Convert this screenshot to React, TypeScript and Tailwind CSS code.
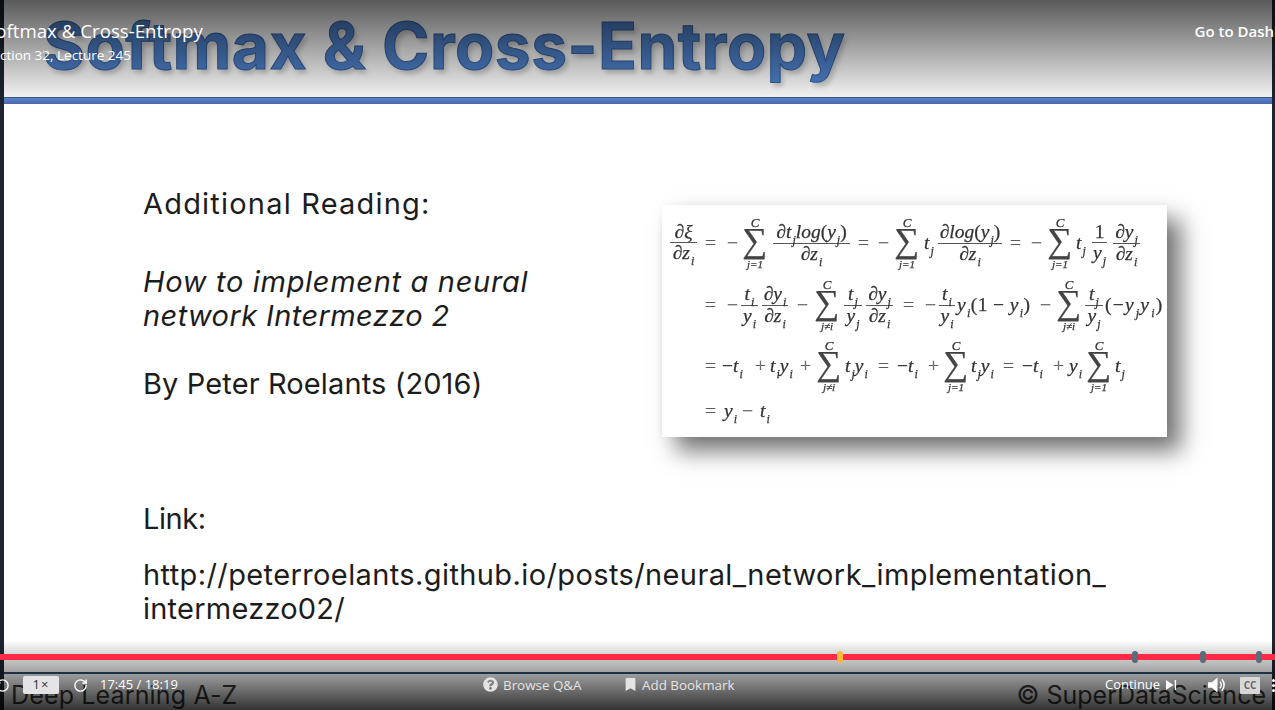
import type { ReactNode } from "react";
import { RotateCcw, RotateCw } from "lucide-react";
import { FaBookmark, FaQuestionCircle } from "react-icons/fa";

function I({ children }: { children: ReactNode }) {
  return <span className="italic">{children}</span>;
}

// variable with a small subscript, e.g. t_j
function V({ n, s }: { n: string; s: string }) {
  return (
    <span className="whitespace-nowrap italic">
      {n}
      <sub className="ml-[1px] text-[12px] leading-none align-[-3px]">{s}</sub>
    </span>
  );
}

function Frac({ top, bottom, className }: { top: ReactNode; bottom: ReactNode; className: string }) {
  return (
    <span className={`inline-flex flex-col items-center leading-[20px] ${className}`}>
      <span className="whitespace-nowrap">{top}</span>
      <span className="h-px w-full shrink-0 bg-[#555]" />
      <span className="whitespace-nowrap">{bottom}</span>
    </span>
  );
}

function Sum({ low, className = "" }: { low: string; className?: string }) {
  return (
    <span className={`inline-flex w-[24px] flex-col items-center ${className}`}>
      <span className="text-[13px] italic leading-[12px]">C</span>
      <span className="mb-[5px] h-[24px] text-[35px] leading-[24px] text-[#444]">∑</span>
      <span className="text-[11px] italic leading-[12px]">{low}</span>
    </span>
  );
}

function Op({ children, className = "" }: { children: ReactNode; className?: string }) {
  return <span className={`w-[11px] text-[#888] ${className}`}>{children}</span>;
}

function Dy({ v, s }: { v: string; s: string }) {
  return (
    <>
      ∂<V n={v} s={s} />
    </>
  );
}

function Formula() {
  return (
    <div className="flex h-[232px] w-[505px] shrink-0 flex-col bg-white pl-[8px] font-['Liberation_Serif',serif] text-[19.5px] text-[#333] shadow-[14px_14px_22px_rgba(0,0,0,0.55),0_0_10px_rgba(0,0,0,0.05)] blur-[0.45px] [-webkit-text-stroke:0.25px_#333]">
      <div className="mt-[12px] flex h-[52px] items-center">
        <Frac className="w-[27px]" top={<>∂<I>ξ</I></>} bottom={<Dy v="z" s="i" />} />
        <Op className="ml-[8px]">=</Op>
        <Op className="ml-[11px]">−</Op>
        <Sum className="ml-[5px]" low="j=1" />
        <Frac className="ml-[6px] w-[77px]" top={<>∂<V n="t" s="j" /><I>log</I>(<V n="y" s="j" />)</>} bottom={<Dy v="z" s="i" />} />
        <Op className="ml-[8px]">=</Op>
        <Op className="ml-[9px]">−</Op>
        <Sum className="ml-[6px]" low="j=1" />
        <span className="ml-[5px] w-[14px]"><V n="t" s="j" /></span>
        <Frac className="w-[64px]" top={<>∂<I>log</I>(<V n="y" s="j" />)</>} bottom={<Dy v="z" s="i" />} />
        <Op className="ml-[8px]">=</Op>
        <Op className="ml-[10px]">−</Op>
        <Sum className="ml-[6px]" low="j=1" />
        <span className="ml-[4px] w-[16px]"><V n="t" s="j" /></span>
        <Frac className="w-[15px]" top="1" bottom={<V n="y" s="j" />} />
        <Frac className="ml-[6px] w-[27px]" top={<Dy v="y" s="j" />} bottom={<Dy v="z" s="i" />} />
      </div>
      <div className="mt-[10px] flex h-[52px] items-center pl-[35px]">
        <Op>=</Op>
        <Op className="ml-[11px]">−</Op>
        <Frac className="ml-[3px] w-[17px]" top={<V n="t" s="i" />} bottom={<V n="y" s="i" />} />
        <Frac className="ml-[4px] w-[26px]" top={<Dy v="y" s="i" />} bottom={<Dy v="z" s="i" />} />
        <Op className="ml-[9px]">−</Op>
        <Sum className="ml-[7px]" low="j≠i" />
        <Frac className="ml-[5px] w-[18px]" top={<V n="t" s="j" />} bottom={<V n="y" s="j" />} />
        <Frac className="ml-[4px] w-[27px]" top={<Dy v="y" s="j" />} bottom={<Dy v="z" s="i" />} />
        <Op className="ml-[10px]">=</Op>
        <Op className="ml-[11px]">−</Op>
        <Frac className="ml-[3px] w-[16px]" top={<V n="t" s="i" />} bottom={<V n="y" s="i" />} />
        <span className="ml-[2px] w-[75px] whitespace-nowrap tracking-[0.4px]"><V n="y" s="i" />(1 − <V n="y" s="i" />)</span>
        <Op className="ml-[8px]">−</Op>
        <Sum className="ml-[6px]" low="j≠i" />
        <Frac className="ml-[4px] w-[18px]" top={<V n="t" s="j" />} bottom={<V n="y" s="j" />} />
        <span className="ml-[2px] whitespace-nowrap tracking-[1.2px]">(−<V n="y" s="j" /><V n="y" s="i" />)</span>
      </div>
      <div className="mt-[9px] flex h-[52px] items-center pl-[35px]">
        <Op>=</Op>
        <span className="ml-[6px] w-[25px] whitespace-nowrap">−<V n="t" s="i" /></span>
        <Op className="ml-[8px]">+</Op>
        <span className="ml-[4px] w-[23px] whitespace-nowrap"><V n="t" s="i" /><V n="y" s="i" /></span>
        <Op className="ml-[7px]">+</Op>
        <Sum className="ml-[6px]" low="j≠i" />
        <span className="ml-[4px] w-[25px] whitespace-nowrap"><V n="t" s="j" /><V n="y" s="i" /></span>
        <Op className="ml-[8px]">=</Op>
        <span className="ml-[8px] w-[23px] whitespace-nowrap">−<V n="t" s="i" /></span>
        <Op className="ml-[8px]">+</Op>
        <Sum className="ml-[5px]" low="j=1" />
        <span className="ml-[3px] w-[25px] whitespace-nowrap"><V n="t" s="j" /><V n="y" s="i" /></span>
        <Op className="ml-[7px]">=</Op>
        <span className="ml-[8px] w-[26px] whitespace-nowrap">−<V n="t" s="i" /></span>
        <Op className="ml-[5px]">+</Op>
        <span className="ml-[5px] w-[11px]"><V n="y" s="i" /></span>
        <Sum className="ml-[7px]" low="j=1" />
        <span className="ml-[4px]"><V n="t" s="j" /></span>
      </div>
      <div className="mt-[8px] flex items-center pl-[35px] leading-[22px]">
        <Op>=</Op>
        <span className="ml-[8px] w-[11px]"><V n="y" s="i" /></span>
        <Op className="ml-[7px]">−</Op>
        <span className="ml-[7px]"><V n="t" s="i" /></span>
      </div>
    </div>
  );
}

function Slide() {
  return (
    <div className="ml-[4px] mr-[3px] flex h-full min-w-0 flex-1 flex-col overflow-hidden bg-white">
      <header className="flex h-[97px] shrink-0 items-start pl-[39px] pt-[7px]">
        <h1 className="whitespace-nowrap font-['Inter',sans-serif] text-[64px] font-bold leading-[78px] tracking-[0.55px] text-[#4f82cc] [-webkit-text-stroke:1px_#34609f] [text-shadow:3px_4px_5px_rgba(0,0,0,0.2)] blur-[0.4px]">
          Softmax &amp; Cross-Entropy
        </h1>
      </header>
      <div className="h-[7px] shrink-0 border-t border-[#3a5a85] bg-linear-to-b from-[#5f8ad8] to-[#4c68ad]" />
      <main className="min-h-0 flex-1 pl-[139px] pt-[83px] font-['Inter',sans-serif] text-[29px] leading-[34px] text-[#1c1c1c]">
        <div className="flex">
          <div className="w-[519px] shrink-0">
            <p className="tracking-[1.2px]">Additional Reading:</p>
            <p className="mt-[44px] italic">
              <span className="tracking-[0.68px]">How to implement a neural</span>
              <br />
              <span className="tracking-[0.4px]">network Intermezzo 2</span>
            </p>
            <p className="mt-[34px] tracking-[0.12px]">By Peter Roelants (2016)</p>
          </div>
          <div className="mt-[18px]">
            <Formula />
          </div>
        </div>
        <p className="mt-[65px] tracking-[-0.4px]">Link:</p>
        <p className="mt-[22px]">
          <span className="tracking-[0.39px]">http://peterroelants.github.io/posts/neural_network_implementation_</span>
          <br />
          <span className="tracking-[0.23px]">intermezzo02/</span>
        </p>
      </main>
      <footer className="flex h-[38px] shrink-0 items-start justify-between border-t-2 border-[#2f4a73] pl-[7px] pr-[6px] font-['Inter',sans-serif] text-[25px] leading-[42px] text-[#3a3a3a]">
        <span className="tracking-[0.15px]">Deep Learning A-Z</span>
        <span>© SuperDataScience</span>
      </footer>
    </div>
  );
}

function TopOverlay() {
  return (
    <div className="absolute -left-[15px] -right-[42px] top-0 flex h-[106px] items-start justify-between bg-linear-to-b from-black/65 to-transparent pt-[19px] font-['Open_Sans',sans-serif] text-white">
      <div>
        <div className="text-[18.7px] leading-[24px]">Softmax &amp; Cross-Entropy</div>
        <div className="mt-[3px] text-[13.5px] leading-[18px]">Section 32, Lecture 245</div>
      </div>
      <div className="pt-[2px] text-[15px] font-semibold leading-[20px]">Go to Dashboard</div>
    </div>
  );
}

function Marker({ className }: { className: string }) {
  return <span className={`absolute top-[-3px] h-[12px] w-[6px] rounded-[3px] ${className}`} />;
}

function BottomOverlay() {
  return (
    <div className="absolute inset-x-0 bottom-0 h-[70px] bg-linear-to-b from-transparent to-black/80 font-['Open_Sans',sans-serif] text-[13px] text-white">
      <div className="relative mt-[14px] h-[6px] bg-[#ff2a45]">
        <Marker className="left-[837px] bg-[#f7b93b]" />
        <Marker className="left-[1132px] bg-[#5c6b7a]" />
        <Marker className="left-[1200px] bg-[#5c6b7a]" />
        <Marker className="left-[1256px] bg-[#5c6b7a]" />
      </div>
      <div className="relative mt-[14px] flex h-[22px] items-center">
        <RotateCcw className="-ml-[5px] h-[15px] w-[15px]" strokeWidth={2.2} />
        <span className="ml-[13px] flex h-[18px] w-[36px] items-center justify-center rounded-[2px] bg-[#e4e4e6] text-[13px] tracking-[1px] text-[#333]">
          1×
        </span>
        <RotateCw className="ml-[14px] h-[15px] w-[15px]" strokeWidth={2.2} />
        <span className="ml-[12px] w-[383px]">17:45 / 18:19</span>
        <span className="flex w-[142px] items-center gap-[5px] text-[13.4px] text-[#e4e4e4]">
          <FaQuestionCircle className="h-[15px] w-[15px]" />
          Browse Q&amp;A
        </span>
        <span className="flex w-[480px] items-center gap-[6px] text-[13.4px] text-[#e4e4e4]">
          <FaBookmark className="h-[13px] w-[11px]" />
          Add Bookmark
        </span>
        <span className="flex w-[103px] items-center gap-[6px]">
          Continue
          <svg viewBox="0 0 12 12" className="h-[12px] w-[11px]" fill="currentColor">
            <path d="M0 0.5 8 6 0 11.5Z" />
            <rect x="9.5" y="0.5" width="1.5" height="11" />
          </svg>
        </span>
        <svg viewBox="0 0 20 16" className="h-[16px] w-[19px]" fill="none" stroke="currentColor">
          <path d="M0 5h4l6-5v16l-6-5H0Z" fill="currentColor" stroke="none" />
          <path d="M12.5 4.5a5 5 0 0 1 0 7M14.5 2a8.5 8.5 0 0 1 0 12" strokeWidth="1.6" />
        </svg>
        <span className="ml-[13px] flex h-[17px] w-[20px] items-center justify-center rounded-[1px] bg-[#d8d8da] text-[10px] font-bold leading-none text-[#666]">
          CC
        </span>
        <span className="ml-[12px] flex flex-col gap-[2px]">
          <span className="h-[3px] w-[3px] rounded-full bg-white" />
          <span className="h-[3px] w-[3px] rounded-full bg-white" />
          <span className="h-[3px] w-[3px] rounded-full bg-white" />
        </span>
      </div>
    </div>
  );
}

export default function App() {
  return (
    <div className="relative flex h-[710px] w-[1275px] overflow-hidden bg-[#1c2530]">
      <Slide />
      <TopOverlay />
      <BottomOverlay />
    </div>
  );
}
